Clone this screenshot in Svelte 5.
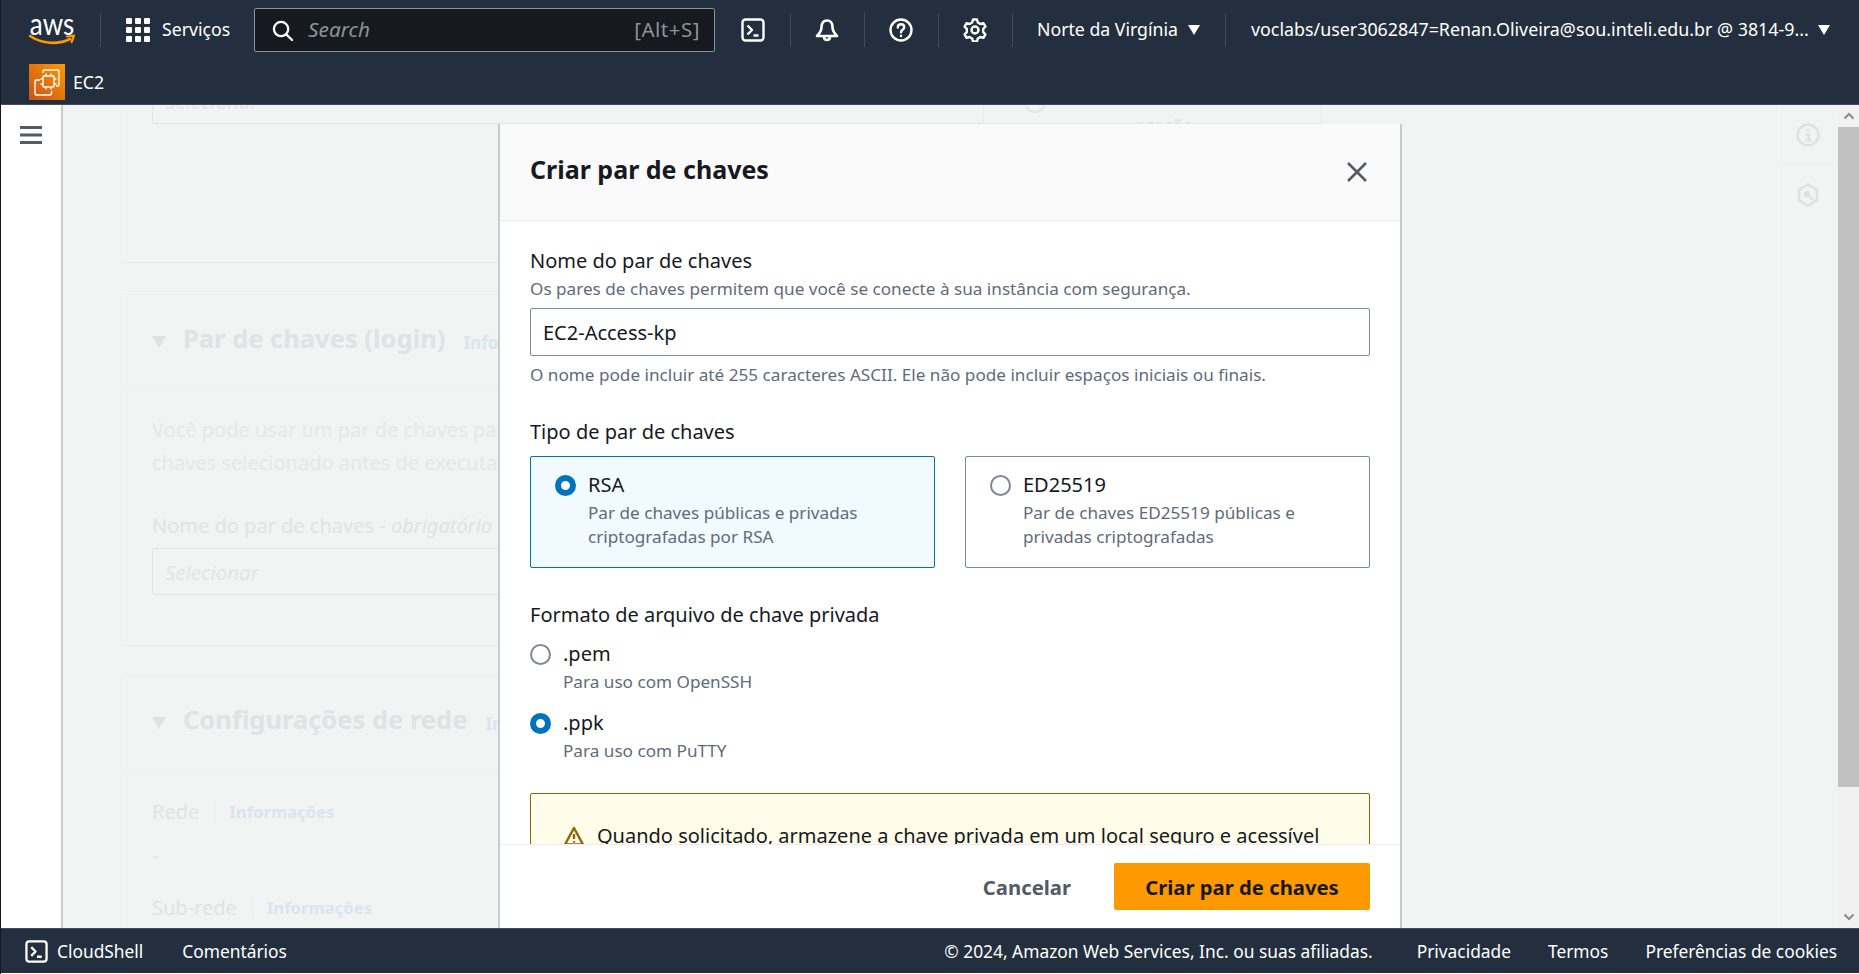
<script lang="ts">
	const headerIconStroke = 2.4;
</script>

<div class="page">
	<header class="topbar">
		<div class="logo">
			<span class="logo-text">aws</span>
			<svg class="logo-smile" viewBox="0 0 48 12" fill="none">
				<path d="M2 2c12 8 28 9 40 3" stroke="#f90" stroke-width="2.6" stroke-linecap="round" />
				<path d="M39 2.5l7-.8-2.4 6.3" stroke="#f90" stroke-width="2.2" stroke-linecap="round" stroke-linejoin="round" />
			</svg>
		</div>
		<span class="sep first"></span>
		<svg class="grid-icon" viewBox="0 0 24 24" fill="#fff">
			<rect x="0" y="0" width="6" height="6" rx="1" /><rect x="9" y="0" width="6" height="6" rx="1" /><rect x="18" y="0" width="6" height="6" rx="1" />
			<rect x="0" y="9" width="6" height="6" rx="1" /><rect x="9" y="9" width="6" height="6" rx="1" /><rect x="18" y="9" width="6" height="6" rx="1" />
			<rect x="0" y="18" width="6" height="6" rx="1" /><rect x="9" y="18" width="6" height="6" rx="1" /><rect x="18" y="18" width="6" height="6" rx="1" />
		</svg>
		<span class="nav-text services">Serviços</span>
		<div class="search">
			<svg class="search-icon" viewBox="0 0 22 22" fill="none" stroke="#fff" stroke-width="2.4" stroke-linecap="round">
				<circle cx="9.5" cy="9.5" r="7.5" /><path d="M15 15l6 6" />
			</svg>
			<span class="search-text">Search</span>
			<span class="search-key">[Alt+S]</span>
		</div>
		<svg class="head-icon shell" viewBox="0 0 24 24" fill="none" stroke="#fff" stroke-width={headerIconStroke} stroke-linejoin="round">
			<rect x="1.5" y="1.5" width="21" height="21" rx="3" /><path d="M6.5 7.5l4.5 4.5-4.5 4.5M12.5 17.5h5" />
		</svg>
		<span class="sep"></span>
		<svg class="head-icon" viewBox="0 0 24 24" fill="none" stroke="#fff" stroke-width="2.6" stroke-linejoin="round">
			<path d="M12 2.500c-3.600 0-5.500 2.800-5.500 6.500 0 3.500-1.500 6-4.500 9h20c-3-3-4.500-5.500-4.500-9 0-3.700-1.900-6.500-5.500-6.500z" /><path d="M9 18.500c0 2 1.200 3.500 3 3.500s3-1.500 3-3.500" />
		</svg>
		<span class="sep"></span>
		<svg class="head-icon" viewBox="0 0 24 24" fill="none" stroke="#fff" stroke-width={headerIconStroke} stroke-linecap="round">
			<circle cx="12" cy="12" r="10.500" /><path d="M8.800 9.500c0-2 1.400-3.200 3.200-3.200s3.200 1.200 3.200 3c0 2.500-3.200 2.500-3.200 5" /><path d="M12 17.800v.2" />
		</svg>
		<span class="sep"></span>
		<svg class="head-icon" viewBox="0 0 24 24" fill="none" stroke="#fff" stroke-width={headerIconStroke} stroke-linejoin="round">
			<path d="M10 1.500h4l.8 3 2.600 1.500 3-.8 2 3.500-2.200 2.200v3.200l2.200 2.200-2 3.500-3-.8-2.600 1.500-.8 3h-4l-.8-3-2.600-1.500-3 .8-2-3.500 2.200-2.200v-3.200L1.600 8.700l2-3.500 3 .8 2.600-1.500z" /><circle cx="12" cy="12" r="3.500" />
		</svg>
		<span class="sep"></span>
		<span class="nav-text region">Norte da Virgínia</span>
		<span class="caret"></span>
		<span class="sep"></span>
		<span class="nav-text account">voclabs/user3062847=Renan.Oliveira@sou.inteli.edu.br @ 3814-9...</span>
		<span class="caret"></span>
	</header>

	<div class="subbar">
		<div class="ec2-badge">
			<svg viewBox="0 0 36 36" fill="none" stroke="#fff" stroke-width="1.400">
				<path d="M14 9V7.500Q14 6 15.500 6H28.500Q30 6 30 7.500V20.500Q30 22 28.500 22H27" />
				<path d="M11 16H7.500Q6 16 6 17.500V29.500Q6 31 7.500 31H21Q22.500 31 22.500 29.500V27" />
				<rect x="14" y="12" width="11" height="11" rx="1" />
				<path d="M17 9.500V12M22 9.500V12M17 23v2.500M22 23v2.500M11.500 15H14M11.500 20H14M25 15h2.500M25 20h2.500" />
			</svg>
		</div>
		<span class="ec2-name">EC2</span>
	</div>

	<main class="main">
		<aside class="sidenav">
			<svg viewBox="0 0 22 18" fill="#545b64"><rect width="22" height="3" /><rect y="7.500" width="22" height="3" /><rect y="15" width="22" height="3" /></svg>
		</aside>

		<div class="backdrop">
			<div class="under">
				<div class="under-top">
					<div class="card first-card">
						<div class="fake-select top-select"><span>Selecionar</span></div>
					</div>
					<div class="top-col">
						<span class="top-circle"></span>
						<span class="top-note">ocação</span>
					</div>
				</div>

				<section class="card keypair">
					<div class="card-head">
						<span class="tri"></span>
						<h2>Par de chaves (login)</h2>
						<span class="info-link">Informações</span>
					</div>
					<div class="card-body">
						<p>Você pode usar um par de chaves para se</p>
						<p>chaves selecionado antes de executar a</p>
						<div class="under-label">Nome do par de chaves - <em>obrigatório</em></div>
						<div class="fake-select"><span>Selecionar</span></div>
					</div>
				</section>

				<section class="card network">
					<div class="card-head">
						<span class="tri"></span>
						<h2>Configurações de rede</h2>
						<span class="info-link">Informações</span>
					</div>
					<div class="card-body">
						<div class="under-row"><span>Rede</span><b>Informações</b></div>
						<div class="dash">-</div>
						<div class="under-row"><span>Sub-rede</span><b>Informações</b></div>
					</div>
				</section>
			</div>

			<div class="rail">
				<div class="rail-cell">
					<svg viewBox="0 0 24 24" fill="none" stroke="#dfe2e3" stroke-width="2.500"><circle cx="12" cy="12" r="10.500" /><path d="M12 6v2.500M9.500 11.500H12.500v6M8.500 17.500h7" /></svg>
				</div>
				<div class="rail-cell">
					<svg viewBox="0 0 24 24" fill="none" stroke="#dfe2e3" stroke-width="2.500" stroke-linejoin="round"><path d="M12 1.500l9 5.200v10.600l-9 5.200-9-5.200V6.700z" /><circle cx="11" cy="11" r="2" fill="#dfe2e3" /><path d="M12 12l5 5" /></svg>
				</div>
			</div>

			<div class="scrollbar">
				<svg class="arrow" viewBox="0 0 12 8" fill="none" stroke="#8b8b8b" stroke-width="2"><path d="M1.500 6.500L6 2l4.500 4.500" /></svg>
				<div class="thumb"></div>
				<svg class="arrow down" viewBox="0 0 12 8" fill="none" stroke="#8b8b8b" stroke-width="2"><path d="M1.500 1.500L6 6l4.500-4.500" /></svg>
			</div>
		</div>

		<div class="modal" role="dialog" aria-label="Criar par de chaves">
			<div class="modal-head">
				<h1>Criar par de chaves</h1>
				<svg class="close" viewBox="0 0 20 20" fill="none" stroke="#545b64" stroke-width="2.600"><path d="M1 1l18 18M19 1L1 19" /></svg>
			</div>

			<div class="modal-body">
				<div class="field-label">Nome do par de chaves</div>
				<div class="hint">Os pares de chaves permitem que você se conecte à sua instância com segurança.</div>
				<div class="input">EC2-Access-kp</div>
				<div class="hint after">O nome pode incluir até 255 caracteres ASCII. Ele não pode incluir espaços iniciais ou finais.</div>

				<div class="field-label type-label">Tipo de par de chaves</div>
				<div class="tiles">
					<div class="tile selected">
						<span class="radio on"></span>
						<div>
							<div class="opt">RSA</div>
							<div class="opt-desc">Par de chaves públicas e privadas<br />criptografadas por RSA</div>
						</div>
					</div>
					<div class="tile">
						<span class="radio"></span>
						<div>
							<div class="opt">ED25519</div>
							<div class="opt-desc">Par de chaves ED25519 públicas e<br />privadas criptografadas</div>
						</div>
					</div>
				</div>

				<div class="field-label format-label">Formato de arquivo de chave privada</div>
				<div class="format">
					<span class="radio"></span>
					<div>
						<div class="opt">.pem</div>
						<div class="opt-desc">Para uso com OpenSSH</div>
					</div>
				</div>
				<div class="format">
					<span class="radio on"></span>
					<div>
						<div class="opt">.ppk</div>
						<div class="opt-desc">Para uso com PuTTY</div>
					</div>
				</div>

				<div class="alert">
					<svg viewBox="0 0 22 20" fill="none" stroke="#8d6605" stroke-width="2.400" stroke-linejoin="round"><path d="M11 2L2 18.500h18z" /><path d="M11 8v5M11 15v1.500" /></svg>
					<span>Quando solicitado, armazene a chave privada em um local seguro e acessível</span>
				</div>
			</div>

			<div class="modal-foot">
				<span class="cancel">Cancelar</span>
				<span class="primary">Criar par de chaves</span>
			</div>
		</div>
	</main>

	<footer class="footer">
		<svg class="foot-shell" viewBox="0 0 24 24" fill="none" stroke="#fff" stroke-width="2.400" stroke-linejoin="round">
			<rect x="1.500" y="1.500" width="21" height="21" rx="3" /><path d="M6.500 7.500l4.500 4.500-4.500 4.500M12.500 17.500h5" />
		</svg>
		<span class="foot-text cloudshell">CloudShell</span>
		<span class="foot-text">Comentários</span>
		<span class="foot-text copy">© 2024, Amazon Web Services, Inc. ou suas afiliadas.</span>
		<span class="foot-text">Privacidade</span>
		<span class="foot-text">Termos</span>
		<span class="foot-text">Preferências de cookies</span>
	</footer>
	<div class="bottom-gap"></div>
</div>

<style>
	:global(body) {
		margin: 0;
		background: #fff;
	}

	.page {
		height: 974px;
		display: flex;
		flex-direction: column;
		overflow: hidden;
		border-left: 1px solid #16191f;
		box-sizing: border-box;
		font-family: 'Noto Sans', 'Open Sans', sans-serif;
		color: #16191f;
	}

	/* top navigation */
	.topbar {
		height: 60px;
		flex-shrink: 0;
		display: flex;
		align-items: center;
		background: #232f3e;
		padding-left: 27px;
	}

	.logo {
		width: 48px;
		height: 36px;
		display: flex;
		flex-direction: column;
		align-items: center;
	}

	.logo-text {
		color: #fff;
		font-family: 'Lato', sans-serif;
		font-size: 26px;
		line-height: 22px;
		transform: scaleY(1.2);
	}

	.logo-smile {
		width: 48px;
		height: 12px;
	}

	.sep {
		width: 1px;
		height: 34px;
		background: #414d5c;
		margin: 0 24px 0 25px;
		flex-shrink: 0;
	}

	.sep.first {
		margin-left: 24px;
		margin-right: 25px;
	}

	.grid-icon {
		width: 24px;
		height: 24px;
	}

	.nav-text {
		color: #fff;
		font-size: 17.7px;
		white-space: nowrap;
		margin-top: -2px;
	}

	.services {
		margin-left: 12px;
		width: 92px;
	}

	.search {
		width: 461px;
		height: 44px;
		box-sizing: border-box;
		display: flex;
		align-items: center;
		background: #16191f;
		border: 1px solid #879596;
		border-radius: 2px;
		padding: 0 14px 0 17px;
		margin-right: 26px;
	}

	.search-icon {
		width: 21px;
		height: 21px;
	}

	.search-text {
		margin: -2px 0 0 15px;
		flex: 1;
		color: #879596;
		font-size: 20.8px;
		font-style: italic;
	}

	.search-key {
		margin-top: -2px;
		color: #879596;
		font-size: 20.5px;
		letter-spacing: 0.5px;
	}

	.head-icon {
		width: 24px;
		height: 24px;
		flex-shrink: 0;
	}

	.region {
		margin-right: 10px;
	}

	.caret {
		width: 0;
		height: 0;
		border-left: 6.5px solid transparent;
		border-right: 6.5px solid transparent;
		border-top: 10px solid #fff;
		flex-shrink: 0;
	}

	.account {
		margin-left: 1px;
		margin-right: 9px;
		font-size: 17.85px;
	}

	.subbar {
		flex-shrink: 0;
		display: flex;
		align-items: center;
		background: #232f3e;
		border-bottom: 1px solid #414d5c;
		padding-left: 28px;
		box-sizing: border-box;
		height: 45px;
	}

	.ec2-badge {
		width: 36px;
		height: 36px;
		background: linear-gradient(45deg, #c8511b, #f90);
	}

	.ec2-badge svg {
		display: block;
		width: 36px;
		height: 36px;
	}

	.ec2-name {
		margin-left: 8px;
		color: #fff;
		font-size: 17.7px;
	}

	/* page under the modal */
	.main {
		flex: 1;
		min-height: 0;
		position: relative;
		display: flex;
		background: #fff;
	}

	.sidenav {
		flex-shrink: 0;
		border-right: 2px solid #c9cccd;
		padding: 21px 0 0 19px;
		box-sizing: border-box;
		width: 62px;
	}

	.sidenav svg {
		display: block;
		width: 22px;
		height: 18px;
	}

	.backdrop {
		flex: 1;
		min-width: 0;
		display: flex;
		background: #f2f3f3;
		overflow: hidden;
	}

	.under {
		flex: 1;
		min-width: 0;
		padding: 0 0 0 58px;
		overflow: hidden;
		color: #e1e3e4;
		font-size: 20px;
	}

	.under-top {
		display: flex;
		height: 158px;
	}

	.card {
		box-sizing: border-box;
		width: 378px;
		overflow: hidden;
		white-space: nowrap;
		border: 1px solid #eef0f0;
		border-bottom-color: #e7e9ea;
	}

	.first-card {
		flex-shrink: 0;
		width: 862px;
		height: 158px;
		padding-left: 30px;
		border-top: none;
		border-right: none;
	}

	.fake-select {
		height: 47px;
		box-sizing: border-box;
		border: 1px solid #e3e5e6;
		border-radius: 2px;
		padding-left: 12px;
		display: flex;
		align-items: center;
		font-style: italic;
		font-size: 20.5px;
		color: #e3e5e6;
	}

	.top-select {
		width: 832px;
		margin-top: -28px;
	}

	.top-col {
		flex-shrink: 0;
		width: 339px;
		height: 19px;
		box-sizing: border-box;
		display: flex;
		overflow: hidden;
		border-left: 1px solid #e7e9ea;
		border-right: 1px solid #e7e9ea;
		border-bottom: 1px solid #e7e9ea;
	}

	.top-circle {
		width: 22px;
		height: 22px;
		box-sizing: border-box;
		margin: -14px 0 0 40px;
		border: 2px solid #e3e5e6;
		border-radius: 50%;
		flex-shrink: 0;
	}

	.top-note {
		margin: 8px 0 0 88px;
		font-size: 18px;
		line-height: 24px;
		color: #dfe1e3;
	}

	.keypair {
		margin-top: 31px;
		height: 352px;
	}

	.network {
		margin-top: 29px;
		height: 400px;
	}

	.card-head {
		height: 95px;
		box-sizing: border-box;
		display: flex;
		align-items: center;
		padding-left: 30px;
		border-bottom: 1px solid #eef0f0;
	}

	.tri {
		width: 0;
		height: 0;
		border-left: 7.5px solid transparent;
		border-right: 7.5px solid transparent;
		border-top: 12px solid #dfe1e3;
		margin-right: 17px;
		flex-shrink: 0;
	}

	.card-head h2 {
		margin: -8px 18px 0 0;
		font-size: 25.5px;
		font-weight: 700;
		color: #e0e2e4;
	}

	.info-link {
		font-size: 17px;
		font-weight: 700;
		color: #d9e6ef;
	}

	.card-body {
		padding: 23px 0 0 30px;
	}

	.card-body p {
		margin: 0;
		line-height: 33px;
		color: #e6e8e8;
	}

	.under-label {
		margin-top: 30px;
		line-height: 33px;
	}

	.keypair .fake-select {
		width: 800px;
		margin-top: 6px;
	}

	.under-row {
		display: flex;
		align-items: center;
		height: 34px;
	}

	.under-row b {
		margin-left: 15px;
		padding-left: 14px;
		border-left: 1px solid #eceeee;
		font-size: 16.7px;
		color: #d9e6ef;
	}

	.dash {
		height: 62px;
		line-height: 56px;
	}

	.rail {
		width: 61px;
		flex-shrink: 0;
		border-left: 1px solid #eef0f0;
	}

	.rail-cell {
		height: 60px;
		display: flex;
		justify-content: center;
		padding-top: 18px;
		box-sizing: border-box;
		border-bottom: 1px solid #eef0f0;
	}

	.rail-cell:last-child {
		border-bottom: none;
	}

	.rail-cell svg {
		width: 24px;
		height: 24px;
	}

	.scrollbar {
		width: 21px;
		flex-shrink: 0;
		display: flex;
		flex-direction: column;
		align-items: center;
		background: #f1f1f1;
	}

	.arrow {
		width: 12px;
		height: 8px;
		margin: 7px 0;
		flex-shrink: 0;
	}

	.thumb {
		width: 100%;
		height: 660px;
		background: #c1c1c1;
	}

	.arrow.down {
		margin-top: auto;
	}

	/* modal */
	.modal {
		position: absolute;
		left: 497px;
		top: 19px;
		bottom: 0;
		width: 904px;
		display: flex;
		flex-direction: column;
		box-sizing: border-box;
		background: #fff;
		border-left: 2px solid #c9cccd;
		border-right: 2px solid #c9cccd;
	}

	.modal-head {
		height: 97px;
		flex-shrink: 0;
		box-sizing: border-box;
		display: flex;
		align-items: center;
		justify-content: space-between;
		padding: 0 33px 0 30px;
		background: #fafafa;
		border-bottom: 1px solid #eaeded;
	}

	.modal-head h1 {
		margin: 0;
		font-size: 25px;
		font-weight: 700;
		position: relative;
		top: -3px;
	}

	.close {
		width: 20px;
		height: 20px;
	}

	.modal-body {
		flex: 1;
		min-height: 0;
		overflow: hidden;
		padding: 26px 30px 0 30px;
	}

	.field-label {
		font-size: 20px;
		line-height: 28px;
	}

	.hint {
		font-size: 17.15px;
		line-height: 27px;
		color: #5f6b7a;
	}

	.hint.after {
		margin-top: 5px;
	}

	.input {
		height: 48px;
		box-sizing: border-box;
		margin-top: 6px;
		padding-left: 12px;
		display: flex;
		align-items: center;
		font-size: 20px;
		border: 1px solid #7d8998;
		border-radius: 2px;
	}

	.type-label {
		margin-top: 30px;
	}

	.tiles {
		display: grid;
		grid-template-columns: 1fr 1fr;
		gap: 30px;
		margin-top: 10px;
	}

	.tile {
		height: 112px;
		box-sizing: border-box;
		display: flex;
		align-items: flex-start;
		gap: 12px;
		padding: 14px 0 0 24px;
		border: 1px solid #7d8998;
		border-radius: 2px;
	}

	.tile.selected {
		background: #f1faff;
		border-color: #0073bb;
	}

	.radio {
		width: 21px;
		height: 21px;
		box-sizing: border-box;
		flex-shrink: 0;
		margin-top: 4px;
		border: 2px solid #7d8998;
		border-radius: 50%;
		background: #fff;
	}

	.radio.on {
		border: 6.5px solid #0073bb;
	}

	.opt {
		font-size: 20px;
		line-height: 28px;
	}

	.opt-desc {
		font-size: 17.15px;
		line-height: 24px;
		margin-top: 2px;
		color: #5f6b7a;
	}

	.format-label {
		margin-top: 33px;
	}

	.format {
		display: flex;
		gap: 12px;
		margin-top: 11px;
		height: 58px;
	}

	.format + .format {
		margin-top: 11px;
	}

	.alert {
		display: flex;
		align-items: flex-start;
		gap: 12px;
		box-sizing: border-box;
		height: 120px;
		margin-top: 26px;
		padding: 28px 0 0 32px;
		background: #fffce9;
		border: 1px solid #8d6605;
		border-radius: 2px;
		font-size: 20px;
		line-height: 28px;
		white-space: nowrap;
	}

	.alert svg {
		width: 22px;
		height: 20px;
		flex-shrink: 0;
		margin-top: 4px;
	}

	.modal-foot {
		height: 84px;
		flex-shrink: 0;
		box-sizing: border-box;
		display: flex;
		align-items: center;
		justify-content: flex-end;
		padding: 0 30px 0 0;
		border-top: 1px solid #eaeded;
		background: #fff;
	}

	.cancel {
		margin-right: 43px;
		font-size: 20.3px;
		font-weight: 700;
		color: #545b64;
	}

	.primary {
		width: 256px;
		height: 47px;
		display: flex;
		align-items: center;
		justify-content: center;
		border-radius: 2px;
		background: #f90;
		font-size: 20.25px;
		font-weight: 700;
	}

	/* footer */
	.footer {
		height: 45px;
		flex-shrink: 0;
		box-sizing: border-box;
		display: flex;
		align-items: center;
		gap: 37px;
		padding: 0 22px 0 24px;
		background: #232f3e;
		border-top: 1px solid #414d5c;
	}

	.foot-shell {
		width: 23px;
		height: 23px;
		margin-right: -28px;
	}

	.foot-text {
		color: #fff;
		font-size: 17.35px;
		white-space: nowrap;
	}

	.cloudshell {
		margin-right: 2px;
	}

	.copy {
		margin-left: auto;
		margin-right: 7px;
	}

	.bottom-gap {
		height: 1px;
		flex-shrink: 0;
		background: #fff;
	}
</style>
